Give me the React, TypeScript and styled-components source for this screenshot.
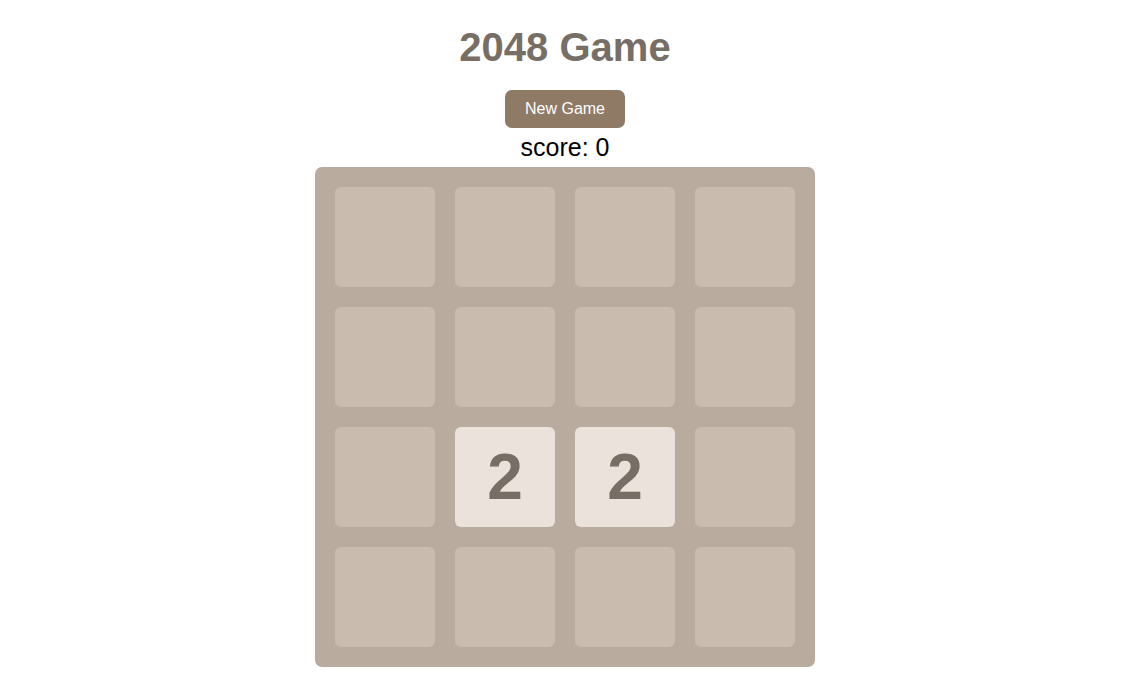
import { createGlobalStyle } from 'styled-components'
import styled from 'styled-components'

const GlobalStyle = createGlobalStyle`
  body {
    margin: 0;
    background: #ffffff;
    font-family: 'Liberation Sans', Arial, sans-serif;
  }
`

const board = [
  [0, 0, 0, 0],
  [0, 0, 0, 0],
  [0, 2, 2, 0],
  [0, 0, 0, 0],
]

export default function App() {
  return (
    <Page>
      <GlobalStyle />
      <Title>2048 Game</Title>
      <NewGameButton>New Game</NewGameButton>
      <Score>score: 0</Score>
      <Board>
        {board.flat().map((value, i) => (
          <Tile key={i} $value={value}>
            {value > 0 ? value : ''}
          </Tile>
        ))}
      </Board>
    </Page>
  )
}

const Page = styled.div`
  width: 1130px;
  display: flex;
  flex-direction: column;
  align-items: center;
  padding-top: 24px;
`
const Title = styled.h1`
  margin: 0 0 20px 0;
  font-size: 40px;
  line-height: 46px;
  font-weight: bold;
  color: #776e65;
`
const NewGameButton = styled.button`
  width: 120px;
  height: 38px;
  border: none;
  border-radius: 7px;
  background-color: #8f7a66;
  color: #ffffff;
  font-family: 'Liberation Sans', Arial, sans-serif;
  font-size: 16px;
  cursor: pointer;
`
const Score = styled.div`
  margin: 5px 0;
  font-size: 25px;
  line-height: 29px;
  color: #000000;
`
const Board = styled.div`
  display: grid;
  grid-template-columns: repeat(4, 100px);
  grid-template-rows: repeat(4, 100px);
  gap: 20px;
  padding: 20px;
  background-color: #b9ab9d;
  border-radius: 7px;
`
const Tile = styled.div<{ $value: number }>`
  display: flex;
  align-items: center;
  justify-content: center;
  border-radius: 6px;
  background-color: ${(p) => (p.$value > 0 ? '#eae2db' : '#c9bbad')};
  color: #776e65;
  font-size: 64px;
  font-weight: bold;
`
